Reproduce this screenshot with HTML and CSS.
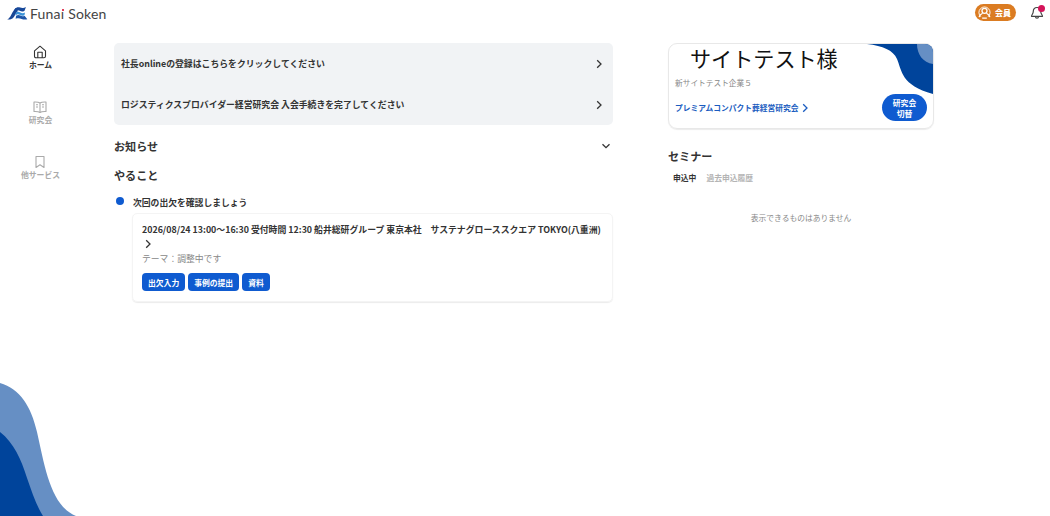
FILE: index.html
```html
<!DOCTYPE html>
<html lang="ja">

<head>
    <meta charset="UTF-8">
    <meta name="viewport" content="width=device-width, initial-scale=1.0">
    <title>Funai Soken</title>
    <link rel="stylesheet" href="styles.css">
</head>

<body>
    <header class="header">
        <div class="logo">
            <svg class="logo-mark" viewBox="0 0 22 16">
                <path d="M0 14.500C4 12.500 5 6 9 2l2.500 3C9 8 8 11 6 13c-2 1.500-4 1.500-6 1.500z" fill="#1a4795" />
                <path d="M8 3.500C12-1.500 14.500 4.500 20 1l-1.500 4C14 8 12.500 2 8.500 6z" fill="#17489a" />
                <path d="M9 7.500c4-4 5.500 2.500 10-.5l-.5 2.500c-4 3-6-3-9.500.5z" fill="#3b93d8" />
                <path d="M9.500 10.500c4-2.500 5 2 9 0L21.500 14c-5 2-7-2.500-12.500-.5z" fill="#1d55a8" />
            </svg>
            <span class="logo-text">Funa<span class="logo-i">ı</span> Soken</span>
        </div>
        <div class="header-right">
            <div class="member">
                <svg class="member-icon" viewBox="0 0 14 14" fill="none" stroke="#fff" stroke-width="1.400">
                    <path d="M3 11.500A6 6 0 1 1 11 11.500" stroke-width="1" />
                    <circle cx="7" cy="5.200" r="2.700" />
                    <path d="M5 7.800C2.800 8.800 1.600 9.800 1.200 12M9 7.800c2.200 1 3.400 2 3.800 4.200M4.500 13h5" />
                </svg>
                <span>会員</span>
            </div>
            <div class="bell">
                <svg class="bell-icon" viewBox="0 0 14 14" fill="none" stroke="#444" stroke-width="1.200" stroke-linecap="round" stroke-linejoin="round">
                    <path d="M7 1.500C4.500 1.500 3.300 3.300 3.300 5.300c0 3-1.800 3.200-1.800 5h11c0-1.800-1.800-2-1.800-5 0-2-1.200-3.800-3.700-3.800zM5.500 10.500c0 2.300 3 2.300 3 0" />
                </svg>
                <span class="bell-dot"></span>
            </div>
        </div>
    </header>

    <div class="container">
        <nav class="sidebar">
            <a class="nav-item active">
                <svg class="nav-icon" viewBox="0 0 14 14">
                    <path d="M1.500 5.800 7 1.200l5.500 4.600v5.400q0 1.600-1.600 1.600H3.100q-1.600 0-1.600-1.600zM4.800 12.800V7.300h4.400v5.500" />
                </svg>
                <span>ホーム</span>
            </a>
            <a class="nav-item">
                <svg class="nav-icon" viewBox="0 0 14 14">
                    <path d="M7 3Q5.500 1.800 1 2v9.500q4.500-.2 6 1 1.500-1.200 6-1V2Q8.500 1.800 7 3zM7 3v9.500M3 4.800h2M3 7h2M9 4.800h2M9 7h2" />
                </svg>
                <span>研究会</span>
            </a>
            <a class="nav-item">
                <svg class="nav-icon" viewBox="0 0 14 14">
                    <path d="M3 1.500h8v11L7 9.800l-4 2.700z" />
                </svg>
                <span>他サービス</span>
            </a>
        </nav>

        <main class="main">
            <div class="notice">
                <a class="notice-row">
                    <span>社長onlineの登録はこちらをクリックしてください</span>
                    <svg class="chevron" viewBox="0 0 10 10"><path d="M3.200 1.200 7 5 3.200 8.800" /></svg>
                </a>
                <a class="notice-row">
                    <span>ロジスティクスプロバイダー経営研究会 入会手続きを完了してください</span>
                    <svg class="chevron" viewBox="0 0 10 10"><path d="M3.200 1.200 7 5 3.200 8.800" /></svg>
                </a>
            </div>

            <div class="section-head">
                <h2>お知らせ</h2>
                <svg class="chevron" viewBox="0 0 10 10"><path d="M1.500 3.200 5 6.700l3.500-3.500" /></svg>
            </div>
            <h2 class="todo-head">やること</h2>

            <div class="todo">
                <span class="todo-dot"></span>
                <div class="todo-body">
                    <h3>次回の出欠を確認しましょう</h3>
                    <div class="todo-card">
                        <p class="todo-title">2026/08/24 13:00～16:30 受付時間 12:30 船井総研グループ 東京本社　サステナグローススクエア TOKYO(八重洲)</p>
                        <svg class="chevron todo-chevron" viewBox="0 0 10 10"><path d="M3.200 1.200 7 5 3.200 8.800" /></svg>
                        <p class="todo-theme">テーマ：調整中です</p>
                        <div class="todo-btns">
                            <button class="btn">出欠入力</button>
                            <button class="btn">事例の提出</button>
                            <button class="btn">資料</button>
                        </div>
                    </div>
                </div>
            </div>
        </main>

        <aside class="side">
            <div class="profile">
                <svg class="profile-wave" viewBox="0 0 66 50">
                    <path d="M0 0c16 2 26 6 30 15 5 12 4 26 36 35V0z" fill="#00449b" />
                    <path d="M50 0c0 10 6 19 16 20V0z" fill="#668fc4" />
                </svg>
                <p class="profile-name">サイトテスト様</p>
                <p class="profile-company">新サイトテスト企業５</p>
                <div class="profile-row">
                    <a class="profile-link">プレミアムコンパクト葬経営研究会
                        <svg class="chevron" viewBox="0 0 10 10"><path d="M3.200 1.200 7 5 3.200 8.800" /></svg>
                    </a>
                    <button class="switch-btn">研究会<br>切替</button>
                </div>
            </div>

            <h2 class="seminar-head">セミナー</h2>
            <div class="tabs">
                <span class="tab active">申込中</span>
                <span class="tab">過去申込履歴</span>
            </div>
            <p class="empty">表示できるものはありません</p>
        </aside>
    </div>

    <svg class="page-wave" viewBox="0 0 76 134">
        <path d="M0 1C20 7 31 24 37 50c8 36 14 74 39 84H0z" fill="#668fc4" />
        <path d="M0 50c14 11 21 27 27 46 5 14 9 27 16 38H0z" fill="#00449b" />
    </svg>
</body>

</html>
```
FILE: styles.css
```css
* {
    margin: 0;
    padding: 0;
    box-sizing: border-box;
}

body {
    position: relative;
    height: 516px;
    overflow: hidden;
    background: #fff;
    color: #333;
    font-family: "Noto Sans CJK JP", sans-serif;
    font-size: 8.86px;
    font-weight: bold;
}

svg {
    display: block;
}

h2 {
    font-size: 11.1px;
    line-height: 16px;
}

.header {
    display: flex;
    justify-content: space-between;
    height: 43px;
    padding: 4px 5px 0 7px;
}

.logo {
    display: flex;
    height: 19px;
    align-items: center;
}

.logo-mark {
    width: 21px;
    height: 15px;
    margin-right: 2px;
}

.logo-text {
    color: #444;
    font-family: Lato, sans-serif;
    font-size: 14px;
    font-weight: normal;
    letter-spacing: 0.2px;
    white-space: nowrap;
}

.logo-i {
    position: relative;
}

.logo-i::after {
    content: "";
    position: absolute;
    top: 4px;
    left: 1px;
    width: 2px;
    height: 2px;
    background: #e0405a;
}

.header-right {
    display: flex;
    gap: 14px;
}

.member {
    display: flex;
    align-items: center;
    gap: 4px;
    width: 41px;
    height: 17px;
    padding-left: 3px;
    border-radius: 9px;
    background: #db7c22;
    color: #fff;
    font-size: 8px;
    font-weight: 900;
    white-space: nowrap;
}

.member-icon {
    width: 13px;
    height: 13px;
    flex: none;
}

.bell {
    position: relative;
    width: 15px;
    height: 17px;
    padding-top: 2px;
}

.bell-icon {
    width: 14px;
    height: 14px;
}

.bell-dot {
    position: absolute;
    top: 1px;
    right: 0;
    width: 7px;
    height: 7px;
    border-radius: 50%;
    background: #d4145a;
}

.container {
    display: flex;
    align-items: flex-start;
}

.sidebar {
    display: flex;
    flex-direction: column;
    align-items: center;
    gap: 29px;
    width: 81px;
    margin-right: 33px;
    padding-top: 2px;
}

.nav-item {
    display: flex;
    flex-direction: column;
    align-items: center;
    color: #aaa;
    font-size: 7.8px;
    line-height: 12px;
}

.nav-item.active {
    color: #333;
}

.nav-icon {
    width: 14px;
    height: 14px;
    fill: none;
    stroke: currentColor;
    stroke-width: 1.1;
    stroke-linejoin: round;
}

.main {
    width: 499px;
    margin-right: 55px;
}

.notice {
    border-radius: 5px;
    background: #f1f3f5;
}

.notice-row {
    display: flex;
    align-items: center;
    justify-content: space-between;
    height: 41px;
    padding: 0 9px 0 7px;
}

.chevron {
    width: 10px;
    height: 10px;
    flex: none;
    fill: none;
    stroke: currentColor;
    stroke-width: 1.3;
}

.section-head {
    display: flex;
    align-items: center;
    justify-content: space-between;
    margin-top: 13px;
    padding-right: 2px;
}

.todo-head {
    margin-top: 13px;
}

.todo {
    display: flex;
    margin-top: 13px;
}

.todo-dot {
    width: 8px;
    height: 8px;
    margin: 1px 8px 0 2px;
    border-radius: 50%;
    background: #0f5bd0;
}

.todo-body {
    flex: 1;
}

.todo h3 {
    padding-left: 1px;
    font-size: 8.8px;
    line-height: 13px;
}

.todo-card {
    height: 89px;
    margin-top: 4px;
    padding: 9px 0 0 9px;
    border: 1px solid #f4f4f4;
    border-radius: 5px;
    box-shadow: 0 1px 1px #ececec;
}

.todo-title {
    font-size: 8.86px;
    line-height: 14px;
    white-space: nowrap;
}

.todo-chevron {
    margin: 2px 0 3px 1px;
}

.todo-theme {
    color: #888;
    font-size: 8.8px;
    font-weight: normal;
    line-height: 14px;
}

.todo-btns {
    display: flex;
    gap: 3px;
    margin-top: 7px;
}

.btn {
    height: 18px;
    padding: 0 6px;
    border: 0;
    border-radius: 4px;
    background: #0f5bd0;
    color: #fff;
    font-family: inherit;
    font-size: 7.8px;
    font-weight: bold;
}

.side {
    width: 266px;
}

.profile {
    position: relative;
    height: 86px;
    padding: 0 6px;
    overflow: hidden;
    border: 1px solid #e8e8e8;
    border-radius: 9px;
    box-shadow: 0 1px 1px #ececec;
}

.profile-wave {
    position: absolute;
    top: 0;
    right: 0;
    width: 66px;
    height: 50px;
}

.profile-name {
    padding-left: 15px;
    color: #111;
    font-size: 21.1px;
    font-weight: normal;
    line-height: 28px;
}

.profile-company {
    margin-top: 5px;
    color: #888;
    font-size: 7.7px;
    font-weight: normal;
    line-height: 12px;
}

.profile-row {
    display: flex;
    align-items: center;
    justify-content: space-between;
    margin-top: 5px;
}

.profile-link {
    display: flex;
    align-items: center;
    gap: 2px;
    color: #1a5cc0;
    font-size: 7.75px;
}

.switch-btn {
    width: 45px;
    height: 27px;
    border: 0;
    border-radius: 14px;
    background: #0f5bd0;
    color: #fff;
    font-family: inherit;
    font-size: 7.8px;
    font-weight: bold;
    line-height: 11px;
}

.seminar-head {
    margin-top: 19px;
}

.tabs {
    display: flex;
    gap: 10px;
    margin-top: 8px;
    padding-left: 5px;
    font-size: 7.8px;
    line-height: 12px;
}

.tab {
    color: #b4b4b4;
}

.tab.active {
    color: #333;
}

.empty {
    margin-top: 28px;
    color: #888;
    font-size: 7.75px;
    font-weight: normal;
    line-height: 12px;
    text-align: center;
}

.page-wave {
    position: absolute;
    left: 0;
    bottom: 0;
    width: 76px;
    height: 134px;
}
```
